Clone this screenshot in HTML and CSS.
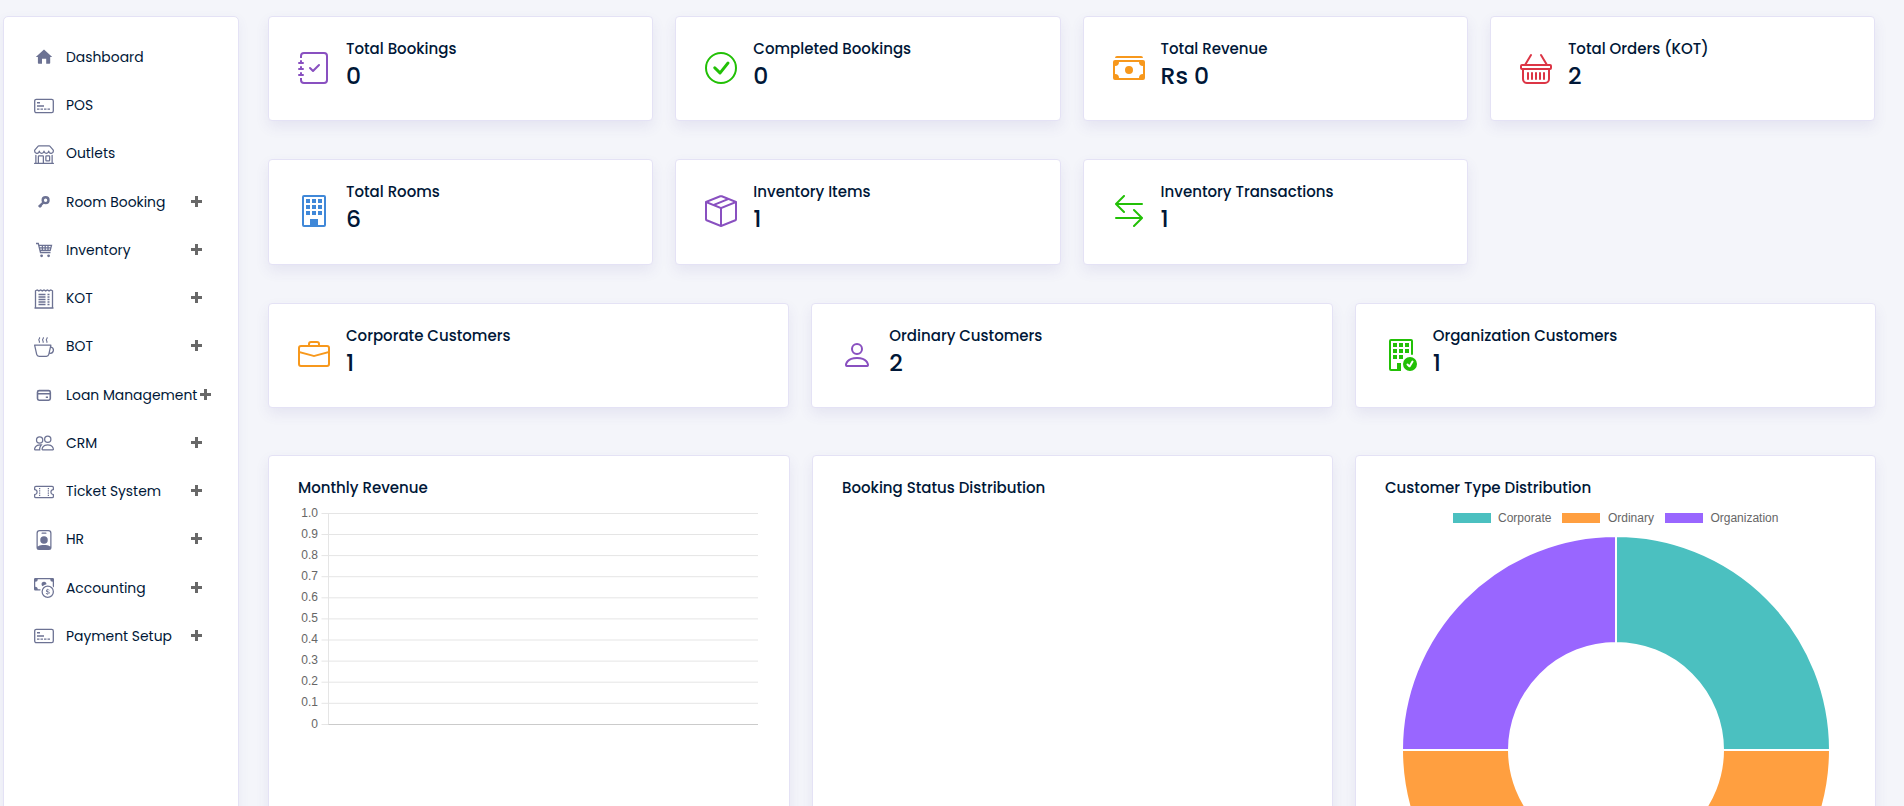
FILE: index.html
```html
<!DOCTYPE html>
<html lang="en">

<head>
    <meta charset="UTF-8">
    <meta name="viewport" content="width=device-width, initial-scale=1.0">
    <title>Hotel Dashboard</title>
    <link rel="stylesheet" href="styles.css">
</head>

<body>

    <div class="page">

        <!-- Sidebar -->
        <nav class="sidebar">
            <ul class="menu">
                <li class="menu-item">
                    <svg class="menu-icon" viewBox="0 0 20 20"><path d="M10 2.6 18.2 10h-2v6a.8.8 0 0 1-.8.8h-3.2v-5H8v5H4.7a.8.8 0 0 1-.8-.8v-6H1.8z" /></svg>
                    <span class="menu-label">Dashboard</span>
                </li>
                <li class="menu-item">
                    <svg class="menu-icon" viewBox="0 0 20 20">
                        <rect class="line" x=".7" y="3.3" width="18.6" height="13.4" rx="1.6" />
                        <path d="M3 6h3v1.6H3zM3 9.3h7v1.4H3zM3 12.6h2.5v1.2H3zM6.5 12.6H9v1.2H6.5zM10 12.6h2.5v1.2H10zM13.5 12.6H16v1.2h-2.5z" />
                    </svg>
                    <span class="menu-label">POS</span>
                </li>
                <li class="menu-item">
                    <svg class="menu-icon" viewBox="0 0 16 16"><path d="M2.97 1.35A1 1 0 0 1 3.73 1h8.54a1 1 0 0 1 .76.35l2.609 3.044A1.5 1.5 0 0 1 16 5.37v.255a2.375 2.375 0 0 1-4.25 1.458A2.371 2.371 0 0 1 9.875 8 2.37 2.37 0 0 1 8 7.083 2.37 2.37 0 0 1 6.125 8a2.37 2.37 0 0 1-1.875-.917A2.375 2.375 0 0 1 0 5.625V5.37a1.5 1.5 0 0 1 .361-.976zm1.78 4.275a1.375 1.375 0 0 0 2.75 0 .5.5 0 0 1 1 0 1.375 1.375 0 0 0 2.75 0 .5.5 0 0 1 1 0 1.375 1.375 0 1 0 2.75 0V5.37a.5.5 0 0 0-.12-.325L12.27 2H3.73L1.12 5.045A.5.5 0 0 0 1 5.37v.255a1.375 1.375 0 0 0 2.75 0 .5.5 0 0 1 1 0M1.5 8.5A.5.5 0 0 1 2 9v6h1v-5a1 1 0 0 1 1-1h3a1 1 0 0 1 1 1v5h6V9a.5.5 0 0 1 1 0v6h.5a.5.5 0 0 1 0 1H.5a.5.5 0 0 1 0-1H1V9a.5.5 0 0 1 .5-.5M4 15h3v-5H4zm5-5a1 1 0 0 1 1-1h2a1 1 0 0 1 1 1v3a1 1 0 0 1-1 1h-2a1 1 0 0 1-1-1zm3 0h-2v3h2z" /></svg>
                    <span class="menu-label">Outlets</span>
                </li>
                <li class="menu-item">
                    <svg class="menu-icon" viewBox="0 0 20 20">
                        <circle class="line thick" cx="11.6" cy="8.2" r="2.9" />
                        <path class="line thick" d="m9.5 10.3-4.7 4.5M6 13.5l1.3 1.3" />
                    </svg>
                    <span class="menu-label">Room Booking</span>
                    <span class="plus"></span>
                </li>
                <li class="menu-item">
                    <svg class="menu-icon" viewBox="0 0 20 20">
                        <path class="line" d="M2 3.5h2.3l2.2 9h10M5 5.3h12.5l-1.3 5H6M5.6 7.8H17M8.4 5.3v5M11.2 5.3v5M14 5.3v5" />
                        <circle cx="7.6" cy="15.8" r="1.4" />
                        <circle cx="14.6" cy="15.8" r="1.4" />
                    </svg>
                    <span class="menu-label">Inventory</span>
                    <span class="plus"></span>
                </li>
                <li class="menu-item">
                    <svg class="menu-icon" viewBox="0 0 20 20">
                        <path class="line" d="M1.5 19V1.8l1.7-.9 1.7 1 1.7-1 1.7 1 1.7-1 1.7 1 1.7-1 1.7 1 1.7-1 1.7.9V19M.5 19h19" />
                        <path class="line" d="M4.5 5.5h7M4.5 8h7M4.5 10.5h7M4.5 13h7M4.5 15.5h7M13.5 5.5h2M13.5 8h2M13.5 10.5h2M13.5 13h2M13.5 15.5h2" />
                    </svg>
                    <span class="menu-label">KOT</span>
                    <span class="plus"></span>
                </li>
                <li class="menu-item">
                    <svg class="menu-icon" viewBox="0 0 16 16">
                        <path d="M.5 6a.5.5 0 0 0-.488.608l1.652 7.434A2.5 2.5 0 0 0 4.104 16h5.792a2.5 2.5 0 0 0 2.44-1.958l.131-.59a3 3 0 0 0 1.3-5.854l.221-.99A.5.5 0 0 0 13.5 6zM13 12.5a2 2 0 0 1-.316-.025l.867-3.898A2.001 2.001 0 0 1 13 12.5M2.64 13.825 1.123 7h11.754l-1.517 6.825A1.5 1.5 0 0 1 9.896 15H4.104a1.5 1.5 0 0 1-1.464-1.175" />
                        <path class="line steam" d="M4.3.3c.8.8-.8 1.3-.4 2.2.2.6.8.9.3 2.1M7.3.3c.8.8-.8 1.3-.4 2.2.2.6.8.9.3 2.1M10.3.3c.8.8-.8 1.3-.4 2.2.2.6.8.9.3 2.1" />
                    </svg>
                    <span class="menu-label">BOT</span>
                    <span class="plus"></span>
                </li>
                <li class="menu-item">
                    <svg class="menu-icon" viewBox="0 0 20 20">
                        <rect class="line loan" x="3.5" y="5.6" width="12.8" height="9.6" rx="1.6" />
                        <path d="M3.4 8h13v1.5h-13zM11.8 11.6H14V13h-2.2z" />
                    </svg>
                    <span class="menu-label">Loan Management</span>
                    <span class="plus"></span>
                </li>
                <li class="menu-item">
                    <svg class="menu-icon" viewBox="0 0 16 16"><path d="M15 14s1 0 1-1-1-4-5-4-5 3-5 4 1 1 1 1zm-7.978-1L7 12.996c.001-.264.167-1.03.76-1.72C8.312 10.629 9.282 10 11 10c1.717 0 2.687.63 3.24 1.276.593.69.758 1.457.76 1.72l-.008.002-.014.002zM11 7a2 2 0 1 0 0-4 2 2 0 0 0 0 4m3-2a3 3 0 1 1-6 0 3 3 0 0 1 6 0M6.936 9.28a6 6 0 0 0-1.23-.247A7 7 0 0 0 5 9c-4 0-5 3-5 4q0 1 1 1h4.216A2.24 2.24 0 0 1 5 13c0-1.01.377-2.042 1.09-2.904.243-.294.526-.569.846-.816M4.92 10A5.5 5.5 0 0 0 4 13H1c0-.26.164-1.03.76-1.724.545-.636 1.492-1.256 3.16-1.275ZM1.5 5.5a3 3 0 1 1 6 0 3 3 0 0 1-6 0m3-2a2 2 0 1 0 0 4 2 2 0 0 0 0-4" /></svg>
                    <span class="menu-label">CRM</span>
                    <span class="plus"></span>
                </li>
                <li class="menu-item">
                    <svg class="menu-icon" viewBox="0 0 16 16">
                        <path d="M4 4.85v.9h1v-.9zm7 0v.9h1v-.9zm-7 1.8v.9h1v-.9zm7 0v.9h1v-.9zm-7 1.8v.9h1v-.9zm7 0v.9h1v-.9zm-7 1.8v.9h1v-.9zm7 0v.9h1v-.9z" />
                        <path d="M1.5 3A1.5 1.5 0 0 0 0 4.5V6a.5.5 0 0 0 .5.5 1.5 1.5 0 1 1 0 3 .5.5 0 0 0-.5.5v1.5A1.5 1.5 0 0 0 1.5 13h13a1.5 1.5 0 0 0 1.5-1.5V10a.5.5 0 0 0-.5-.5 1.5 1.5 0 0 1 0-3A.5.5 0 0 0 16 6V4.5A1.5 1.5 0 0 0 14.5 3zM1 4.5a.5.5 0 0 1 .5-.5h13a.5.5 0 0 1 .5.5v1.05a2.5 2.5 0 0 0 0 4.9v1.05a.5.5 0 0 1-.5.5h-13a.5.5 0 0 1-.5-.5v-1.05a2.5 2.5 0 0 0 0-4.9z" />
                    </svg>
                    <span class="menu-label">Ticket System</span>
                    <span class="plus"></span>
                </li>
                <li class="menu-item">
                    <svg class="menu-icon" viewBox="0 0 16 16">
                        <path d="M6.5 2a.5.5 0 0 0 0 1h3a.5.5 0 0 0 0-1zM11 8a3 3 0 1 1-6 0 3 3 0 0 1 6 0" />
                        <path d="M4.5 0A2.5 2.5 0 0 0 2 2.5V14a2 2 0 0 0 2 2h8a2 2 0 0 0 2-2V2.5A2.5 2.5 0 0 0 11.5 0zM3 2.5A1.5 1.5 0 0 1 4.5 1h7A1.5 1.5 0 0 1 13 2.5v10.795a4.2 4.2 0 0 0-.776-.492C11.392 12.387 10.063 12 8 12s-3.392.387-4.224.803a4.2 4.2 0 0 0-.776.492z" />
                    </svg>
                    <span class="menu-label">HR</span>
                    <span class="plus"></span>
                </li>
                <li class="menu-item">
                    <svg class="menu-icon" viewBox="0 0 16 16">
                        <path fill-rule="evenodd" d="M11 15a4 4 0 1 0 0-8 4 4 0 0 0 0 8m5-4a5 5 0 1 1-10 0 5 5 0 0 1 10 0" />
                        <path d="M9.438 11.944c.047.596.518 1.06 1.363 1.116v.44h.375v-.443c.875-.061 1.386-.529 1.386-1.207 0-.618-.39-.936-1.09-1.1l-.296-.07v-1.2c.376.043.614.248.671.532h.658c-.047-.575-.54-1.024-1.329-1.073V8.5h-.375v.45c-.747.073-1.255.522-1.255 1.158 0 .562.378.92 1.007 1.066l.248.061v1.272c-.384-.058-.639-.27-.696-.563h-.668zm1.36-1.354c-.369-.085-.569-.26-.569-.522 0-.294.216-.514.572-.578v1.1zm.432.746c.449.104.655.272.655.569 0 .339-.257.571-.709.614v-1.195z" />
                        <path d="M1 0a1 1 0 0 0-1 1v8a1 1 0 0 0 1 1h4.083q.088-.517.258-1H3a2 2 0 0 0-2-2V3a2 2 0 0 0 2-2h10a2 2 0 0 0 2 2v3.528c.38.34.717.728 1 1.154V1a1 1 0 0 0-1-1z" />
                        <path d="M9.998 5.083 10 5a2 2 0 1 0-3.132 1.65 6 6 0 0 1 3.13-1.567" />
                    </svg>
                    <span class="menu-label">Accounting</span>
                    <span class="plus"></span>
                </li>
                <li class="menu-item">
                    <svg class="menu-icon" viewBox="0 0 20 20">
                        <rect class="line" x=".7" y="3.3" width="18.6" height="13.4" rx="1.6" />
                        <path d="M3 6h3v1.6H3zM3 9.3h7v1.4H3zM3 12.6h2.5v1.2H3zM6.5 12.6H9v1.2H6.5zM10 12.6h2.5v1.2H10zM13.5 12.6H16v1.2h-2.5z" />
                    </svg>
                    <span class="menu-label">Payment Setup</span>
                    <span class="plus"></span>
                </li>
            </ul>
        </nav>

        <main class="content">

            <!-- Bookings, revenue, orders -->
            <div class="row row-4">
                <div class="card stat">
                    <svg class="stat-icon purple" viewBox="0 0 16 16">
                        <path d="M10.854 6.146a.5.5 0 0 1 0 .708l-3 3a.5.5 0 0 1-.708 0l-1.5-1.5a.5.5 0 1 1 .708-.708L7.5 8.793l2.646-2.647a.5.5 0 0 1 .708 0z" />
                        <path d="M3 0h10a2 2 0 0 1 2 2v12a2 2 0 0 1-2 2H3a2 2 0 0 1-2-2v-1h1v1a1 1 0 0 0 1 1h10a1 1 0 0 0 1-1V2a1 1 0 0 0-1-1H3a1 1 0 0 0-1 1v1H1V2a2 2 0 0 1 2-2z" />
                        <path d="M1 5v-.5a.5.5 0 0 1 1 0V5h.5a.5.5 0 0 1 0 1h-2a.5.5 0 0 1 0-1H1zm0 3v-.5a.5.5 0 0 1 1 0V8h.5a.5.5 0 0 1 0 1h-2a.5.5 0 0 1 0-1H1zm0 3v-.5a.5.5 0 0 1 1 0v.5h.5a.5.5 0 0 1 0 1h-2a.5.5 0 0 1 0-1H1z" />
                    </svg>
                    <div class="stat-text">
                        <h6 class="stat-title">Total Bookings</h6>
                        <h3 class="stat-value">0</h3>
                    </div>
                </div>
                <div class="card stat">
                    <svg class="stat-icon green" viewBox="0 0 16 16">
                        <path d="M8 15A7 7 0 1 1 8 1a7 7 0 0 1 0 14zm0 1A8 8 0 1 0 8 0a8 8 0 0 0 0 16z" />
                        <path d="M10.97 4.97a.235.235 0 0 0-.02.022L7.477 9.417 5.384 7.323a.75.75 0 0 0-1.06 1.06L6.97 11.03a.75.75 0 0 0 1.079-.02l3.992-4.99a.75.75 0 0 0-1.071-1.05z" />
                    </svg>
                    <div class="stat-text">
                        <h6 class="stat-title">Completed Bookings</h6>
                        <h3 class="stat-value">0</h3>
                    </div>
                </div>
                <div class="card stat">
                    <svg class="stat-icon orange" viewBox="0 0 16 16">
                        <path d="M1 3a1 1 0 0 1 1-1h12a1 1 0 0 1 1 1H1zm7 8a2 2 0 1 0 0-4 2 2 0 0 0 0 4z" />
                        <path d="M0 5a1 1 0 0 1 1-1h14a1 1 0 0 1 1 1v8a1 1 0 0 1-1 1H1a1 1 0 0 1-1-1V5zm3 0a2 2 0 0 1-2 2v4a2 2 0 0 1 2 2h10a2 2 0 0 1 2-2V7a2 2 0 0 1-2-2H3z" />
                    </svg>
                    <div class="stat-text">
                        <h6 class="stat-title">Total Revenue</h6>
                        <h3 class="stat-value">Rs 0</h3>
                    </div>
                </div>
                <div class="card stat">
                    <svg class="stat-icon red" viewBox="0 0 16 16"><path d="M5.757 1.071a.5.5 0 0 1 .172.686L3.383 6h9.234L10.07 1.757a.5.5 0 1 1 .858-.514L13.783 6H15a1 1 0 0 1 1 1v1a1 1 0 0 1-1 1v4.5a2.5 2.5 0 0 1-2.5 2.5h-9A2.5 2.5 0 0 1 1 13.5V9a1 1 0 0 1-1-1V7a1 1 0 0 1 1-1h1.217L5.07 1.243a.5.5 0 0 1 .686-.172zM2 9v4.5A1.5 1.5 0 0 0 3.5 15h9a1.5 1.5 0 0 0 1.5-1.5V9H2zM1 7v1h14V7H1zm3 3a.5.5 0 0 1 .5.5v3a.5.5 0 0 1-1 0v-3A.5.5 0 0 1 4 10zm2 0a.5.5 0 0 1 .5.5v3a.5.5 0 0 1-1 0v-3A.5.5 0 0 1 6 10zm2 0a.5.5 0 0 1 .5.5v3a.5.5 0 0 1-1 0v-3A.5.5 0 0 1 8 10zm2 0a.5.5 0 0 1 .5.5v3a.5.5 0 0 1-1 0v-3a.5.5 0 0 1 .5-.5zm2 0a.5.5 0 0 1 .5.5v3a.5.5 0 0 1-1 0v-3a.5.5 0 0 1 .5-.5z" /></svg>
                    <div class="stat-text">
                        <h6 class="stat-title">Total Orders (KOT)</h6>
                        <h3 class="stat-value">2</h3>
                    </div>
                </div>
            </div>

            <!-- Rooms and inventory -->
            <div class="row row-4">
                <div class="card stat">
                    <svg class="stat-icon blue" viewBox="0 0 16 16">
                        <path d="M4 2h2v2H4zM7 2h2v2H7zM10 2h2v2h-2zM4 5h2v2H4zM7 5h2v2H7zM10 5h2v2h-2zM4 8h2v2H4zM7 8h2v2H7zM10 8h2v2h-2zM6 12h4v4H6z" />
                        <path d="M2 1a1 1 0 0 1 1-1h10a1 1 0 0 1 1 1v14a1 1 0 0 1-1 1H3a1 1 0 0 1-1-1V1zm11 0H3v14h10V1z" />
                    </svg>
                    <div class="stat-text">
                        <h6 class="stat-title">Total Rooms</h6>
                        <h3 class="stat-value">6</h3>
                    </div>
                </div>
                <div class="card stat">
                    <svg class="stat-icon purple" viewBox="0 0 16 16"><path d="M8.186 1.113a.5.5 0 0 0-.372 0L1.846 3.5l2.404.961L10.404 2l-2.218-.887zm3.564 1.426L5.596 5 8 5.961 14.154 3.5l-2.404-.961zm3.25 1.7-6.5 2.6v7.922l6.5-2.6V4.24zM7.5 14.762V6.838L1 4.239v7.923l6.5 2.6zM7.443.184a1.5 1.5 0 0 1 1.114 0l7.129 2.852A.5.5 0 0 1 16 3.5v8.662a1 1 0 0 1-.629.928l-7.185 2.874a.5.5 0 0 1-.372 0L.63 13.09a1 1 0 0 1-.63-.928V3.5a.5.5 0 0 1 .314-.464L7.443.184z" /></svg>
                    <div class="stat-text">
                        <h6 class="stat-title">Inventory Items</h6>
                        <h3 class="stat-value">1</h3>
                    </div>
                </div>
                <div class="card stat">
                    <svg class="stat-icon green" viewBox="0 0 16 16"><path d="M1 11.5a.5.5 0 0 0 .5.5h11.793l-3.147 3.146a.5.5 0 0 0 .708.708l4-4a.5.5 0 0 0 0-.708l-4-4a.5.5 0 0 0-.708.708L13.293 11H1.5a.5.5 0 0 0-.5.5zm14-7a.5.5 0 0 1-.5.5H2.707l3.147 3.146a.5.5 0 1 1-.708.708l-4-4a.5.5 0 0 1 0-.708l4-4a.5.5 0 1 1 .708.708L2.707 4H14.5a.5.5 0 0 1 .5.5z" /></svg>
                    <div class="stat-text">
                        <h6 class="stat-title">Inventory Transactions</h6>
                        <h3 class="stat-value">1</h3>
                    </div>
                </div>
            </div>

            <!-- Customers -->
            <div class="row row-3">
                <div class="card stat">
                    <svg class="stat-icon orange" viewBox="0 0 16 16"><path d="M6.5 1A1.5 1.5 0 0 0 5 2.5V3H1.5A1.5 1.5 0 0 0 0 4.5v8A1.5 1.5 0 0 0 1.5 14h13a1.5 1.5 0 0 0 1.5-1.5v-8A1.5 1.5 0 0 0 14.5 3H11v-.5A1.5 1.5 0 0 0 9.5 1h-3zm0 1h3a.5.5 0 0 1 .5.5V3H6v-.5a.5.5 0 0 1 .5-.5zm1.886 6.914L15 7.151V12.5a.5.5 0 0 1-.5.5h-13a.5.5 0 0 1-.5-.5V7.15l6.614 1.764a1.5 1.5 0 0 0 .772 0zM1.5 4h13a.5.5 0 0 1 .5.5v1.616L8.129 7.948a.5.5 0 0 1-.258 0L1 6.116V4.5a.5.5 0 0 1 .5-.5z" /></svg>
                    <div class="stat-text">
                        <h6 class="stat-title">Corporate Customers</h6>
                        <h3 class="stat-value">1</h3>
                    </div>
                </div>
                <div class="card stat">
                    <svg class="stat-icon purple" viewBox="0 0 16 16"><path d="M8 8a3 3 0 1 0 0-6 3 3 0 0 0 0 6zm2-3a2 2 0 1 1-4 0 2 2 0 0 1 4 0zm4 8c0 1-1 1-1 1H3s-1 0-1-1 1-4 6-4 6 3 6 4zm-1-.004c-.001-.246-.154-.986-.832-1.664C11.516 10.68 10.289 10 8 10c-2.29 0-3.516.68-4.168 1.332-.678.678-.83 1.418-.832 1.664h10z" /></svg>
                    <div class="stat-text">
                        <h6 class="stat-title">Ordinary Customers</h6>
                        <h3 class="stat-value">2</h3>
                    </div>
                </div>
                <div class="card stat">
                    <svg class="stat-icon green" viewBox="0 0 16 16">
                        <path d="M12.5 16a3.5 3.5 0 1 0 0-7 3.5 3.5 0 0 0 0 7m1.679-4.493-1.335 2.226a.75.75 0 0 1-1.174.144l-.774-.773a.5.5 0 0 1 .708-.708l.547.548 1.17-1.951a.5.5 0 1 1 .858.514" />
                        <path d="M2 1a1 1 0 0 1 1-1h10a1 1 0 0 1 1 1v6.5a.5.5 0 0 1-1 0V1H3v14h3v-3h2v4H3a1 1 0 0 1-1-1z" />
                        <path d="M4 2h2v2H4zM7 2h2v2H7zM10 2h2v2h-2zM4 5h2v2H4zM7 5h2v2H7zM10 5h2v2h-2zM4 8h2v2H4zM7 8h2v2H7z" />
                    </svg>
                    <div class="stat-text">
                        <h6 class="stat-title">Organization Customers</h6>
                        <h3 class="stat-value">1</h3>
                    </div>
                </div>
            </div>

            <!-- Charts -->
            <div class="row row-3 charts">
                <div class="card chart-card">
                    <h6 class="chart-title">Monthly Revenue</h6>
                    <svg class="bar-chart" width="462" height="230" viewBox="0 0 462 230">
                        <g class="grid">
                            <path d="M23.5 10.5H460M23.5 31.5H460M23.5 52.6H460M23.5 73.7H460M23.5 94.8H460M23.5 115.9H460M23.5 137H460M23.5 158.1H460M23.5 179.2H460M23.5 200.3H460M23.5 221.5H460" />
                            <path d="M30.5 10.5v211" />
                            <path class="zero" d="M30.5 221.5H460" />
                        </g>
                        <g class="ticks">
                            <text x="20" y="14">1.0</text>
                            <text x="20" y="35">0.9</text>
                            <text x="20" y="56">0.8</text>
                            <text x="20" y="77">0.7</text>
                            <text x="20" y="98">0.6</text>
                            <text x="20" y="119">0.5</text>
                            <text x="20" y="140">0.4</text>
                            <text x="20" y="161">0.3</text>
                            <text x="20" y="182">0.2</text>
                            <text x="20" y="203">0.1</text>
                            <text x="20" y="225">0</text>
                        </g>
                    </svg>
                </div>
                <div class="card chart-card">
                    <h6 class="chart-title">Booking Status Distribution</h6>
                </div>
                <div class="card chart-card">
                    <h6 class="chart-title">Customer Type Distribution</h6>
                    <div class="legend">
                        <span class="legend-item"><i class="swatch teal"></i>Corporate</span>
                        <span class="legend-item"><i class="swatch amber"></i>Ordinary</span>
                        <span class="legend-item"><i class="swatch violet"></i>Organization</span>
                    </div>
                    <svg class="donut" width="430" height="430" viewBox="-215 -215 430 430">
                        <path class="teal" d="M0-214A214 214 0 0 1 214 0H107A107 107 0 0 0 0-107z" />
                        <path class="amber" d="M214 0A214 214 0 0 1-214 0H-107A107 107 0 0 0 107 0z" />
                        <path class="violet" d="M-214 0A214 214 0 0 1 0-214V-107A107 107 0 0 0-107 0z" />
                    </svg>
                </div>
            </div>

        </main>
    </div>

</body>
</html>
```

FILE: styles.css
```css
* {
    box-sizing: border-box;
}

body {
    margin: 0;
    background-color: #f4f5fa;
    color: #001737;
    font-family: Poppins, Inter, sans-serif;
}

h3,
h6 {
    margin: 0;
    font-weight: 500;
}

.page {
    display: flex;
    height: 100vh;
    overflow: hidden;
    padding: 16px 28px 0 3px;
}

/* Sidebar */
.sidebar {
    flex: none;
    width: 236px;
    height: 900px;
    padding: 16.2px 0 0 30px;
    background-color: #fff;
    border: 1px solid #e4e2f5;
    border-radius: 5px;
    box-shadow: 0 4px 12px rgba(90, 80, 170, 0.07);
}

.menu {
    list-style: none;
    margin: 0;
    padding: 0;
}

.menu-item {
    display: flex;
    align-items: center;
    height: 48.25px;
    font-size: 13.9px;
}

.menu-icon {
    flex: none;
    width: 20px;
    height: 20px;
    margin-right: 12px;
    fill: #6c7293;
}

.menu-icon .line {
    fill: none;
    stroke: #6c7293;
    stroke-width: 1.3;
}

.menu-icon .loan {
    stroke-width: 1.6;
}

.menu-icon .thick {
    stroke-width: 2.4;
}

.menu-icon .steam {
    stroke-width: 0.9;
}

.menu-label {
    min-width: 121.5px;
    white-space: nowrap;
}

.plus {
    flex: none;
    width: 11px;
    height: 11px;
    margin: -2px 0 0 3px;
    background:
        linear-gradient(#686868, #686868) center / 11px 3px no-repeat,
        linear-gradient(#686868, #686868) center / 3px 11px no-repeat;
}

/* Cards */
.content {
    flex: 1;
    margin-left: 29px;
}

.row {
    display: grid;
    column-gap: 22px;
    margin-bottom: 38.3px;
}

.row-4 {
    grid-template-columns: repeat(4, 385.3px);
}

.row-3 {
    grid-template-columns: repeat(3, 1fr);
}

.charts {
    margin-top: 46.6px;
}

.card {
    background-color: #fff;
    border: 1px solid #e4e2f5;
    border-radius: 4px;
    box-shadow: 0 6px 14px rgba(80, 70, 160, 0.09);
}

.stat {
    display: flex;
    align-items: flex-start;
    height: 105.2px;
    padding: 23px 29px 0;
}

.stat-icon {
    flex: none;
    width: 32px;
    height: 32px;
    margin: 12px 16px 0 0;
    fill: currentColor;
}

.purple { color: #8950c0; }
.green { color: #22c006; }
.orange { color: #f7981c; }
.red { color: #dc3545; }
.blue { color: #4088d8; }

.stat-title,
.chart-title {
    font-size: 15px;
    line-height: 18px;
}

.stat-value {
    margin-top: 3px;
    font-size: 23.5px;
    line-height: 30px;
}

/* Charts */
.chart-card {
    height: 600px;
    padding: 23px 29px;
}

.bar-chart {
    display: block;
    margin-top: 6px;
}

.grid path {
    fill: none;
    stroke: #e5e5e5;
    stroke-width: 1;
}

.grid .zero {
    stroke: #cbcbcb;
}

.ticks text {
    fill: #666;
    font: 12px "Liberation Sans", Arial, sans-serif;
    text-anchor: end;
}

.legend {
    display: flex;
    justify-content: center;
    gap: 11px;
    margin-top: 14px;
    color: #666;
    font: 12px/14px "Liberation Sans", Arial, sans-serif;
}

.legend-item {
    display: flex;
    align-items: center;
}

.swatch {
    width: 38px;
    height: 10px;
    margin-right: 7.5px;
}

.teal {
    background-color: #4bc0c0;
    fill: #4bc0c0;
}

.amber {
    background-color: #ff9f40;
    fill: #ff9f40;
}

.violet {
    background-color: #9966ff;
    fill: #9966ff;
}

.donut {
    display: block;
    margin: 10px auto 0;
}

.donut path {
    stroke: #fff;
    stroke-width: 2;
}
```
